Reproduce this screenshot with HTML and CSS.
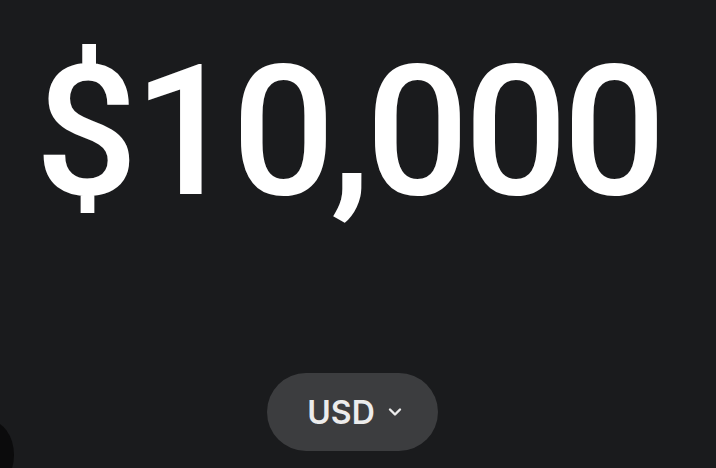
FILE: index.html
```html
<!DOCTYPE html>
<html lang="en">
<head>
    <meta charset="UTF-8">
    <meta name="viewport" content="width=device-width, initial-scale=1.0">
    <title>Amount</title>
    <link rel="stylesheet" href="styles.css">
</head>
<body>
    <div class="amount-screen">
        <div class="amount">$10,000</div>
        <button class="currency">
            USD
            <svg class="chevron" viewBox="0 0 16 10" width="16" height="10">
                <path d="M3 2.5 L8 7.5 L13 2.5" fill="none" stroke="currentColor" stroke-width="2.4" stroke-linecap="round" stroke-linejoin="round"/>
            </svg>
        </button>
    </div>
    <div class="corner-dot"></div>
</body>
</html>
```

FILE: styles.css
```css
html, body {
    height: 100%;
    margin: 0;
    font-family: Inter, "Noto Sans", sans-serif;
    user-select: none;
}

body {
    background-color: #1a1b1d;
    overflow: hidden;
    position: relative;
}

.amount-screen {
    display: flex;
    flex-direction: column;
    align-items: center;
    padding-top: 32px;
    padding-right: 12px;
}

.amount {
    color: #ffffff;
    font-family: Roboto, Inter, sans-serif;
    font-size: 182px;
    font-weight: 500;
    line-height: 200px;
    letter-spacing: -5px;
    margin-left: -8px;
}

.currency {
    margin-top: 141px;
    width: 171px;
    height: 78px;
    border: none;
    border-radius: 39px;
    background-color: #3c3d3f;
    color: #ececec;
    font-family: inherit;
    font-size: 32px;
    font-weight: 600;
    display: flex;
    align-items: center;
    justify-content: center;
    gap: 12px;
    padding: 0 0 0 6px;
}

.chevron {
    width: 16px;
    height: 10px;
}

.corner-dot {
    position: absolute;
    left: -38px;
    top: 420px;
    width: 52px;
    height: 70px;
    border-radius: 50%;
    background-color: #0b0b0c;
}
```
